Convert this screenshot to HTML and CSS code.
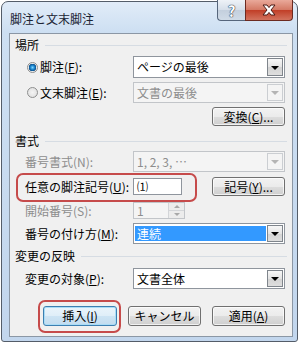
FILE: index.html
```html
<!DOCTYPE html>
<html>
<head>
<meta charset="utf-8">
<link rel="stylesheet" href="styles.css">
<title>脚注と文末脚注</title>
</head>
<body>
<div class="win">
  <div class="titlebar">
    <span class="title">脚注と文末脚注</span>
    <div class="capbtns">
      <div class="cap help">?</div>
      <div class="cap close">
        <svg width="16" height="12" viewBox="0 0 16 12"><path d="M2 1 H6 L8 3.6 L10 1 H14 L10 6 L14 11 H10 L8 8.4 L6 11 H2 L6 6 Z" fill="#fff" stroke="#4a1a14" stroke-width="1"/></svg>
      </div>
    </div>
  </div>
  <div class="client">
    <div class="sect"><span>場所</span></div>
    <div class="row rrow r1">
      <span class="radio on"></span><span class="lab">脚注(<u>F</u>):</span>
      <div class="combo"><span class="val">ページの最後</span><span class="drop"></span></div>
    </div>
    <div class="row rrow r2">
      <span class="radio"></span><span class="lab">文末脚注(<u>E</u>):</span>
      <div class="combo off"><span class="val">文書の最後</span><span class="drop"></span></div>
    </div>
    <div class="row end r3">
      <div class="btn">変換(<u>C</u>)...</div>
    </div>

    <div class="sect s2"><span>書式</span></div>
    <div class="row r4">
      <span class="lab dim">番号書式(N):</span>
      <div class="combo off"><span class="val">1, 2, 3, …</span><span class="drop"></span></div>
    </div>
    <div class="row r5">
      <span class="lab">任意の脚注記号(<u>U</u>):</span>
      <div class="field">⑴</div>
      <div class="btn push">記号(<u>Y</u>)...</div>
    </div>
    <div class="row r6">
      <span class="lab dim">開始番号(S):</span>
      <div class="spin"><span class="num">1</span><span class="arrows"><i class="up"></i><i class="dn"></i></span></div>
    </div>
    <div class="row r7">
      <span class="lab">番号の付け方(<u>M</u>):</span>
      <div class="combo sel"><span class="val">連続</span><span class="drop"></span></div>
    </div>

    <div class="sect s3"><span>変更の反映</span></div>
    <div class="row r8">
      <span class="lab">変更の対象(<u>P</u>):</span>
      <div class="combo"><span class="val">文書全体</span><span class="drop"></span></div>
    </div>

    <div class="actions">
      <div class="btn def">挿入(<u>I</u>)</div>
      <div class="btn">キャンセル</div>
      <div class="btn">適用(<u>A</u>)</div>
    </div>
  </div>
</div>
<div class="mark mark-sym"></div>
<div class="mark mark-ins"></div>
</body>
</html>
```

FILE: styles.css
```css
body { margin: 0; background: #fff; color: #000;
  font-family: "Noto Sans CJK JP", "Liberation Sans", sans-serif; font-size: 12px; }
u { text-underline-offset: 1px; }

/* window frame */
.win { box-sizing: border-box; width: 297px; height: 341px; margin: 1px 0 0 1px;
  padding: 0 4px 4px 7px; border: 1px solid #545d69; border-radius: 7px 7px 3px 3px;
  background: linear-gradient(#e1ecf8, #cddff2 30px, #c2d6ed);
  display: flex; flex-direction: column; }
.titlebar { height: 31px; display: flex; align-items: flex-start; }
.title { padding: 9px 0 0 1px; line-height: 16px; color: #1b2433; }
.capbtns { margin: -2px 0 0 auto; display: flex; }
.cap { box-sizing: border-box; height: 21px; border: 1px solid #56667c; border-top: none;
  display: flex; align-items: center; justify-content: center; }
.help { width: 28px; border-radius: 0 0 0 4px; border-right: none;
  background: linear-gradient(#eef2f7, #d5dee9 50%, #c3cfdd 51%, #d0dbe7);
  color: #fff; font-weight: bold; font-size: 15px; line-height: 1;
  text-shadow: 0 0 1px #2c3a4e, 0 0 1px #2c3a4e, 0 0 1px #2c3a4e; }
.close { width: 48px; border-radius: 0 0 4px 0; border-color: #6c2a20;
  background: linear-gradient(#e9a99a, #d47a66 48%, #c13f28 52%, #d2735e); }

/* client area */
.client { flex: 1; border: 1px solid #8b97a5; background: #f0f0f0;
  padding: 3px 7px 0 5px; }
.sect { display: flex; align-items: center; height: 16px; line-height: 16px; }
.sect::after { content: ""; flex: 1; border-top: 1px solid #d6dce3; margin: 1px -2px 0 6px; }
.s2 { margin-top: 7px; }
.s3 { margin-top: 4px; }

.row { display: flex; align-items: center; height: 21px; padding-left: 10px; }
.rrow { padding-left: 12px; }
.end { justify-content: flex-end; }
.r1 { margin-top: 3px; height: 22px; }
.r2 { margin-top: 4px; }
.r3 { margin-top: 4px; height: 19px; }
.r4 { margin-top: 2px; }
.r5 { margin-top: 4px; }
.r6 { margin-top: 3px; }
.r7 { margin-top: 2px; }
.r8 { margin-top: 4px; }

.lab { width: 108px; line-height: 16px; white-space: nowrap; }
.rrow .lab { width: 93px; }
.dim { color: #8d8d8d; }

.radio { box-sizing: border-box; width: 11px; height: 11px; margin-right: 2px;
  border: 1px solid #8e8f8f; border-radius: 50%;
  background: radial-gradient(circle, #f4f4f4 0, #dcdcdc 100%); }
.radio.on { background: radial-gradient(circle, #7fd6ff 0, #1e88d0 2px, #0a4f8c 3.5px, #e9e9e9 4px, #f6f6f6 100%); }

/* combo boxes */
.combo { box-sizing: border-box; width: 152px; height: 100%; display: flex;
  align-items: stretch; border: 1px solid #8f959d; background: #fff; }
.combo .val { flex: 1; padding-left: 3px; line-height: 19px; white-space: nowrap; }
.drop { box-sizing: border-box; width: 16px; margin: 1px; border: 1px solid #7f858c;
  background: linear-gradient(#f7f7f7, #e4e4e4 50%, #d3d3d3 51%, #dedede);
  display: flex; align-items: center; justify-content: center; }
.drop::after { content: ""; border-top: 4px solid #000; border-left: 4px solid transparent;
  border-right: 4px solid transparent; margin-top: 1px; }
.combo.off { border-color: #c2c5c9; background: #f4f4f4; color: #8d8d8d; }
.combo.off .drop { border-color: #cbced2; background: #f4f4f4; }
.combo.off .drop::after { border-top-color: #b4b4b4; }
.combo.sel .val { background: #3399ff; color: #fff; margin: 2px 0 2px 1px; padding-left: 2px;
  line-height: 15px; }

.field { box-sizing: border-box; width: 49px; height: 17px; border: 1px solid #8f959d;
  background: #fff; padding-left: 3px; line-height: 15px; font-size: 11px; }
.spin { box-sizing: border-box; width: 52px; height: 17px; display: flex;
  border: 1px solid #c2c5c9; background: #f4f4f4; color: #8d8d8d; }
.spin .num { flex: 1; padding-left: 3px; line-height: 15px; }
.arrows { width: 15px; display: flex; flex-direction: column; border-left: 1px solid #d3d5d8; }
.arrows i { flex: 1; display: flex; align-items: center; justify-content: center;
  background: #ececec; }
.arrows i + i { border-top: 1px solid #d3d5d8; }
.up::after { content: ""; border-bottom: 3px solid #a8a8a8;
  border-left: 3px solid transparent; border-right: 3px solid transparent; }
.dn::after { content: ""; border-top: 3px solid #a8a8a8;
  border-left: 3px solid transparent; border-right: 3px solid transparent; }

/* buttons */
.btn { box-sizing: border-box; width: 73px; height: 19px; border: 1px solid #707070;
  border-radius: 3px; text-align: center; line-height: 17px; white-space: nowrap;
  background: linear-gradient(#f2f2f2, #ebebeb 50%, #dddddd 51%, #cfcfcf);
  box-shadow: inset 0 0 0 1px rgba(255,255,255,0.7); }
.push { margin-left: auto; }
.actions { display: flex; justify-content: flex-end; gap: 11px; margin-top: 17px; }
.actions .btn { height: 20px; line-height: 18px; }
.actions .btn.def { width: 74px; border-color: #3c7fb1;
  background: linear-gradient(#eaf4fb, #dfeef8 50%, #cde4f4 51%, #c2dcef);
  box-shadow: inset 0 0 0 1px #a9dcf6; }

/* red callouts drawn over the dialog */
.mark { position: absolute; box-sizing: border-box; border: 2px solid #c64b4b; border-radius: 7px; }
.mark-sym { left: 16px; top: 173px; width: 181px; height: 29px; }
.mark-ins { left: 38px; top: 300px; width: 83px; height: 33px; }
```
